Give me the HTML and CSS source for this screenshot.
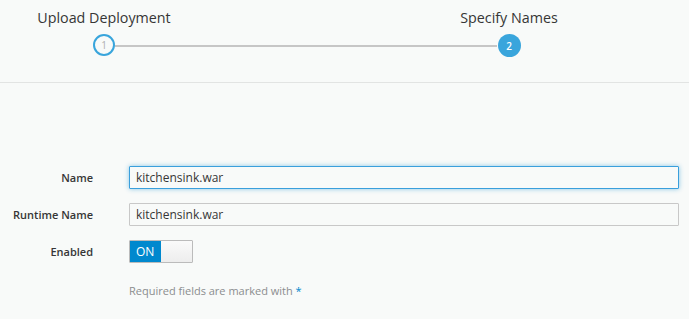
FILE: index.html
```html
<!DOCTYPE html>
<html lang="en">
<head>
  <meta charset="UTF-8">
  <meta name="viewport" content="width=device-width, initial-scale=1.0">
  <title>Deployment Wizard</title>
  <link rel="stylesheet" href="styles.css">
</head>
<body>
  <div class="wizard">
    <div class="wizard__steps">
      <div class="wizard__step wizard__step--done">
        <span class="wizard__step-title">Upload Deployment</span>
        <span class="wizard__step-num">1</span>
      </div>
      <div class="wizard__step-line"></div>
      <div class="wizard__step wizard__step--active">
        <span class="wizard__step-title">Specify Names</span>
        <span class="wizard__step-num">2</span>
      </div>
    </div>
    <form class="wizard__body">
      <div class="form__row">
        <label class="form__label" for="name">Name</label>
        <input class="form__input form__input--focus" id="name" type="text" value="kitchensink.war">
      </div>
      <div class="form__row">
        <label class="form__label" for="runtime-name">Runtime Name</label>
        <input class="form__input" id="runtime-name" type="text" value="kitchensink.war">
      </div>
      <div class="form__row">
        <span class="form__label">Enabled</span>
        <div class="switch">
          <span class="switch__on">ON</span>
          <span class="switch__handle"></span>
        </div>
      </div>
      <div class="form__row">
        <span></span>
        <p class="form__help">Required fields are marked with <span class="form__required">*</span></p>
      </div>
    </form>
  </div>
</body>
</html>
```

FILE: styles.css
```css
* {
  box-sizing: border-box;
  font-family: 'Open Sans', 'Liberation Sans', sans-serif;
}
body {
  margin: 0;
  background-color: #f8faf9;
  color: #363636;
}
.wizard__steps {
  height: 83px;
  padding: 8px 0 0 24px;
  display: flex;
  border-bottom: 1px solid #e2e4e3;
}
.wizard__step {
  width: 160px;
  display: flex;
  flex-direction: column;
  align-items: center;
}
.wizard__step-title {
  font-size: 14.3px;
  line-height: 20px;
}
.wizard__step-num {
  width: 22px;
  height: 22px;
  margin-top: 6px;
  border-radius: 50%;
  display: flex;
  justify-content: center;
  align-items: center;
  font-size: 10px;
  font-weight: 600;
}
.wizard__step--done .wizard__step-num {
  border: 2px solid #39a5dc;
  color: #b0b0b0;
  font-weight: 400;
}
.wizard__step--active .wizard__step-num {
  width: 23px;
  height: 23px;
  background-color: #39a5dc;
  color: #fff;
}
.wizard__step-line {
  width: 382px;
  height: 2px;
  margin: 37px -68px 0 -69px;
  background-color: #c6c6c6;
}
.wizard__body {
  padding: 83px 10px 0 0;
}
.form__row {
  display: grid;
  grid-template-columns: 93px 1fr;
  column-gap: 36px;
  align-items: center;
  margin-bottom: 14px;
}
.form__label {
  text-align: right;
  font-size: 11px;
  font-weight: 600;
}
.form__input {
  height: 23px;
  padding: 0 6px;
  border: 1px solid #c8c8c8;
  border-radius: 1px;
  background-color: #f8faf9;
  color: #363636;
  font-size: 12px;
  outline: none;
}
.form__input--focus {
  border-color: #3a9fdc;
  box-shadow: 0 0 5px rgba(0, 136, 206, 0.45);
}
.switch {
  width: 64px;
  height: 23px;
  display: flex;
  border: 1px solid #bbb;
  border-radius: 1px;
}
.switch__on {
  width: 31px;
  background-color: #0088ce;
  color: #fff;
  font-size: 12px;
  line-height: 21px;
  padding-left: 6px;
}
.switch__handle {
  flex: 1;
  background: linear-gradient(#fafafa, #ededed);
}
.form__help {
  margin: 6px 0 0;
  font-size: 11px;
  color: #8b8d8f;
}
.form__required {
  color: #0088ce;
}
```
